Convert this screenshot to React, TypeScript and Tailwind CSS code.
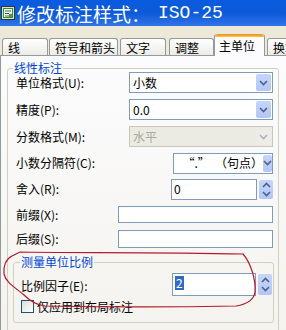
const tabs = [
  { label: '线', cls: 'ml-[2px] w-[46px]' },
  { label: '符号和箭头', cls: 'ml-[1px] w-[69px]' },
  { label: '文字', cls: 'ml-[2px] w-[46px]' },
  { label: '调整', cls: 'ml-[3px] w-[45px]' },
  { label: '主单位', cls: 'ml-[0px] w-[51px]', active: true },
  { label: '换算单位', cls: 'ml-[2px] w-[60px]' },
];

function Chevron({ up = false }: { up?: boolean }) {
  return (
    <svg width="9" height="6" viewBox="0 0 9 6">
      <path
        d={up ? 'M1 5 L4.5 1.5 L8 5' : 'M1 1 L4.5 4.5 L8 1'}
        fill="none"
        stroke="#4d6185"
        strokeWidth="1.6"
      />
    </svg>
  );
}

function Select({ value, width, disabled = false }: { value: string; width: string; disabled?: boolean }) {
  return (
    <div
      className={`flex h-[21px] items-center border pl-[3px] pr-[1px] ${width} ${
        disabled ? 'border-[#c9c7ba] bg-[#ebebe4] text-[#aca899]' : 'border-[#7f9db9] bg-white'
      }`}
    >
      <span className="flex-1 whitespace-pre leading-none">{value}</span>
      <div
        className={`flex h-[17px] w-[15px] items-center justify-center rounded-[2px] ${
          disabled ? 'bg-[#f0efea] opacity-40' : 'bg-gradient-to-b from-[#c5d5fc] to-[#b3c7f5]'
        }`}
      >
        <Chevron />
      </div>
    </div>
  );
}

function Spinner({ value, width, height, selected = false }: { value: string; width: string; height: string; selected?: boolean }) {
  return (
    <div className={`flex items-stretch gap-[2px] ${height}`}>
      <div className={`flex items-start border border-[#7f9db9] bg-white pl-[2px] pt-[2px] ${width}`}>
        <span className={`leading-[14px] ${selected ? 'bg-[#316ac5] px-[1px] text-white' : ''}`}>{value}</span>
      </div>
      <div className="my-[1px] flex w-[14px] flex-col items-center justify-center gap-[3px] rounded-[2px] bg-gradient-to-b from-[#c5d5fc] to-[#b3c7f5]">
        <Chevron up />
        <Chevron />
      </div>
    </div>
  );
}

function TextBox({ height }: { height: string }) {
  return <div className={`w-[155px] border border-[#7f9db9] bg-white ${height}`} />;
}

export default function App() {
  return (
    <div className="relative h-[330px] w-[286px] overflow-hidden bg-[#ece9d8] font-['Noto_Sans_CJK_SC',sans-serif] text-[12px] text-black">
      {/* Title bar */}
      <div className="flex h-[26px] items-center bg-gradient-to-b from-[#0b5be0] via-[#0a5ad8] to-[#2f74e8] pl-[1px]">
        <svg width="14" height="14" viewBox="0 0 14 14">
          <rect x="0.5" y="0.5" width="13" height="13" fill="#d8e4d0" stroke="#2b3b2b" />
          <rect x="2.5" y="2.5" width="9" height="9" fill="#ffffff" stroke="#3a8a3a" />
          <path d="M4 5 H10 M4 7.5 H8 M4 10 H10" stroke="#2a6a2a" strokeWidth="1" />
          <rect x="8" y="8" width="3" height="3" fill="#4a9a4a" />
        </svg>
        <span className="ml-[2px] text-[19px] leading-none text-white">修改标注样式：</span>
        <span className="ml-[8px] font-['Liberation_Mono',monospace] text-[18px] leading-none text-white">ISO-25</span>
      </div>

      {/* Tabs */}
      <div className="flex h-[29px] items-end">
        {tabs.map((t) =>
          t.active ? (
            <div
              key={t.label}
              className={`relative z-10 -mb-[1px] h-[22px] shrink-0 rounded-t-[3px] border-x border-[#919b9c] bg-[#fcfcfe] ${t.cls}`}
            >
              <div className="h-[3px] rounded-t-[3px] bg-gradient-to-b from-[#e68b2c] to-[#ffc73c]" />
              <div className="pl-[4px] pt-[2px] leading-[14px]">{t.label}</div>
            </div>
          ) : (
            <div
              key={t.label}
              className={`h-[17px] shrink-0 rounded-t-[3px] border-x border-t border-[#919b9c] bg-gradient-to-b from-[#ffffff] to-[#ecebe6] pl-[5px] pt-[2px] leading-[13px] ${t.cls}`}
            >
              {t.label}
            </div>
          ),
        )}
      </div>

      {/* Panel */}
      <div className="h-[280px] w-[300px] border border-[#919b9c] bg-gradient-to-b from-[#fcfcfe] to-[#f4f3ee]">
        <div className="relative ml-[6px] mt-[12px] h-[290px] w-[272px] rounded-[3px] border border-[#d0d0bf]">
          <span className="absolute -top-[7px] left-[5px] bg-[#fbfbfb] px-[1px] leading-[12px] text-[#0046d5]">线性标注</span>

          <div className="pl-[8px] pr-[5px]">
            <div className="flex h-[27px] items-center justify-between leading-none">
              <span>单位格式(U):</span>
              <Select value="小数" width="w-[144px]" />
            </div>
            <div className="flex h-[27px] items-center justify-between leading-none">
              <span>精度(P):</span>
              <Select value="0.0" width="w-[144px]" />
            </div>
            <div className="flex h-[27px] items-center justify-between leading-none">
              <span>分数格式(M):</span>
              <Select value="水平" width="w-[144px]" disabled />
            </div>
            <div className="flex h-[26px] items-center justify-between leading-none">
              <span>小数分隔符(C):</span>
              <Select value={'  “.”  （句点）'} width="w-[100px]" />
            </div>
            <div className="flex h-[26px] items-center justify-between leading-none">
              <span>舍入(R):</span>
              <Spinner value="0" width="w-[86px]" height="h-[21px]" />
            </div>
            <div className="flex h-[25px] items-center justify-between leading-none">
              <span>前缀(X):</span>
              <TextBox height="h-[17px]" />
            </div>
            <div className="flex h-[24px] items-center justify-between leading-none">
              <span>后缀(S):</span>
              <TextBox height="h-[18px]" />
            </div>
          </div>

          {/* Measurement scale */}
          <div className="relative ml-[5px] mt-[11px] h-[61px] w-[261px] rounded-[3px] border border-[#d0d0bf] pl-[7px] pr-[1px]">
            <span className="absolute -top-[7px] left-[6px] bg-[#f9f9f8] px-[1px] leading-[12px] text-[#0046d5]">测量单位比例</span>
            <div className="mt-[10px] flex h-[23px] items-center justify-between leading-none">
              <span className="mt-[3px]">比例因子(E):</span>
              <Spinner value="2" width="w-[84px]" height="h-[23px]" selected />
            </div>
            <div className="mt-[4px] flex h-[13px] items-center">
              <div className="h-[13px] w-[13px] border border-[#1c5180] bg-gradient-to-br from-[#dcdcd7] to-[#ffffff]" />
              <span className="ml-[3px] leading-none">仅应用到布局标注</span>
            </div>
          </div>
        </div>
      </div>

      {/* Red hand-drawn annotation */}
      <svg className="pointer-events-none absolute left-0 top-0" width="286" height="330" viewBox="0 0 286 330">
        <path
          d="M20 252 C60 253 160 252 243 254 C250 262 256 278 255 292 C254 300 248 304 236 306 C180 307 100 307 45 306 C36 305 30 301 24 295 C16 288 6 283 4 274 C3 266 6 259 12 256 L20 252"
          fill="none"
          stroke="#b31b2a"
          strokeWidth="1.2"
        />
      </svg>
    </div>
  );
}
